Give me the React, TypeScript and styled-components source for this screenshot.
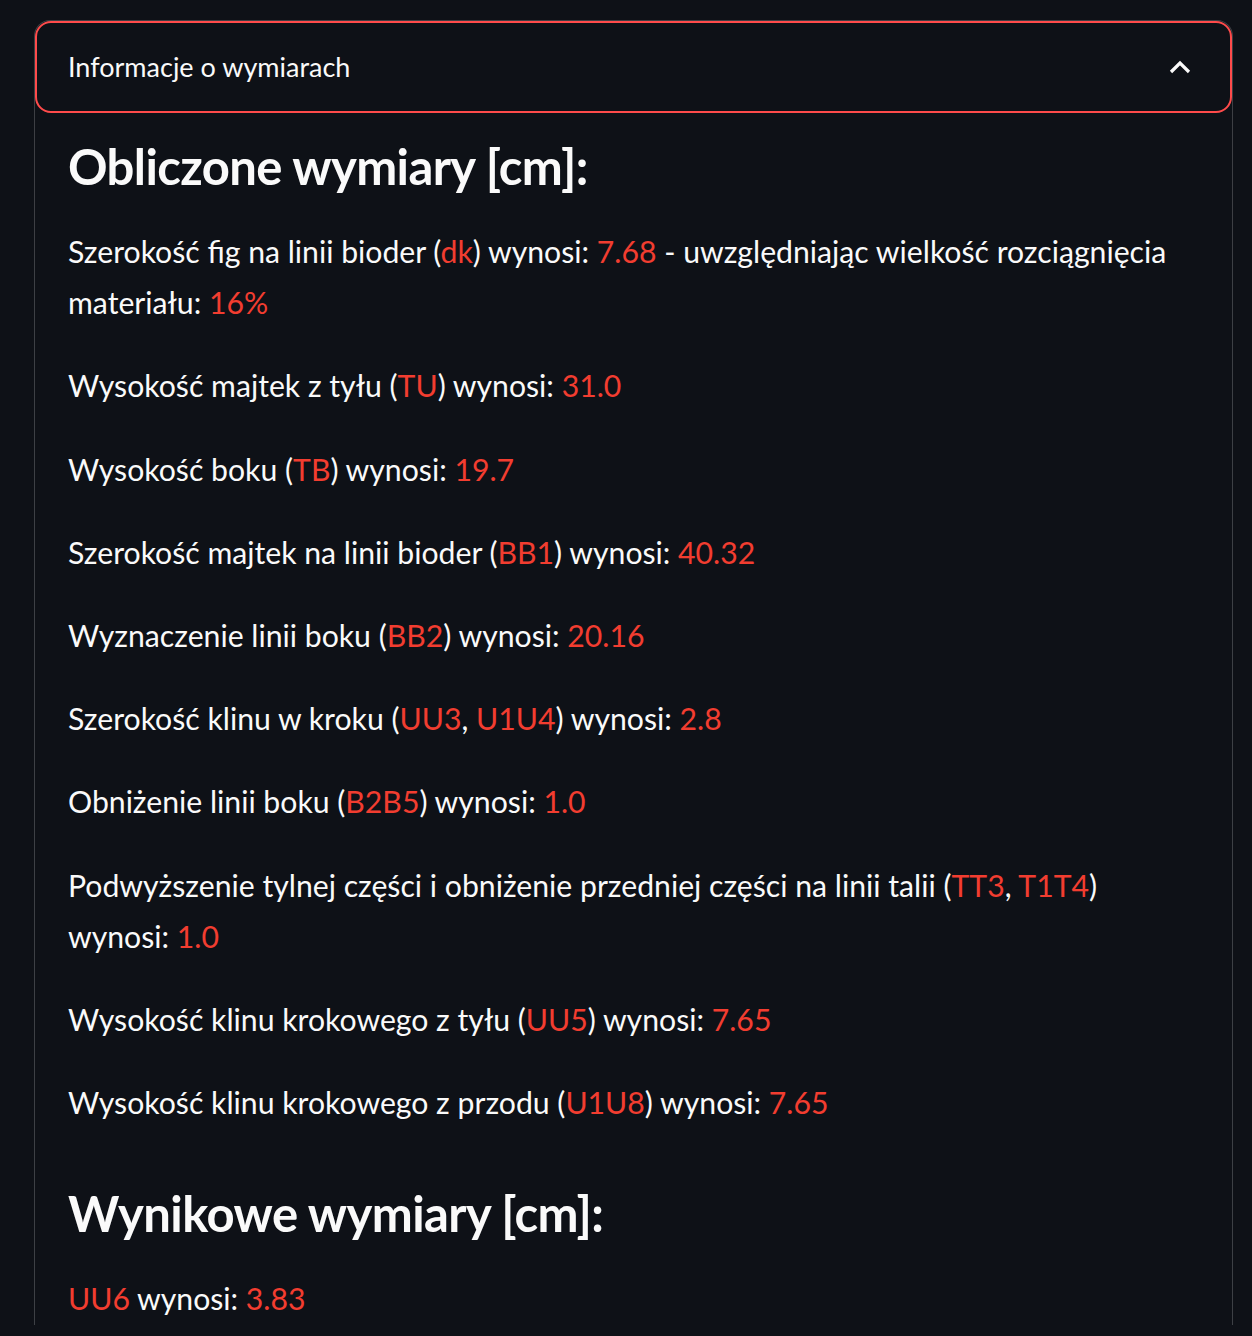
import React, { useState } from 'react';
import styled, { createGlobalStyle } from 'styled-components';

const GlobalStyle = createGlobalStyle`
  html, body {
    margin: 0;
    padding: 0;
    background: #0e1117;
  }
  body {
    font-family: Lato, "Noto Sans", sans-serif;
    color: #fafafa;
  }
`;

const Page = styled.div`
  min-height: 1336px;
  padding: 20px 19px 0 34px;
  box-sizing: border-box;
`;

const Expander = styled.div`
  border: 1px solid rgba(250, 250, 250, 0.2);
  border-bottom: none;
  border-radius: 16px 16px 0 0;
`;

const Summary = styled.button`
  display: flex;
  width: 100%;
  height: 92px;
  box-sizing: border-box;
  align-items: center;
  justify-content: space-between;
  padding: 0 39px 0 31px;
  background: transparent;
  border: 2px solid #ff4b4b;
  border-radius: 16px;
  color: #fafafa;
  font-family: inherit;
  font-size: 27px;
  cursor: pointer;
  margin: 0;

  span {
    position: relative;
    top: -1px;
  }
`;

const Content = styled.div`
  padding: 0 40px 0 33px;
`;

const Heading = styled.h3`
  margin: 0;
  padding: 20px 0 26px;
  font-size: 49px;
  letter-spacing: -0.6px;
  line-height: 67px;
  font-weight: 700;
`;

const Para = styled.p`
  margin: 0 0 32px;
  font-size: 30.2px;
  line-height: 51.2px;
`;

const Red = styled.span`
  color: #f23d30;
`;

const Chevron: React.FC<{ open: boolean }> = ({ open }) => (
  <svg width="22" height="14" viewBox="0 0 22 14" style={{ transform: open ? 'none' : 'rotate(180deg)' }}>
    <path d="M2 12 L11 3 L20 12" fill="none" stroke="#fafafa" strokeWidth="3.2" />
  </svg>
);

type Part = string | { r: string };

const computed: Part[][] = [
  ['Szerokość fig na linii bioder (', { r: 'dk' }, ') wynosi: ', { r: '7.68' }, ' - uwzględniając wielkość rozciągnięcia materiału: ', { r: '16%' }],
  ['Wysokość majtek z tyłu (', { r: 'TU' }, ') wynosi: ', { r: '31.0' }],
  ['Wysokość boku (', { r: 'TB' }, ') wynosi: ', { r: '19.7' }],
  ['Szerokość majtek na linii bioder (', { r: 'BB1' }, ') wynosi: ', { r: '40.32' }],
  ['Wyznaczenie linii boku (', { r: 'BB2' }, ') wynosi: ', { r: '20.16' }],
  ['Szerokość klinu w kroku (', { r: 'UU3' }, ', ', { r: 'U1U4' }, ') wynosi: ', { r: '2.8' }],
  ['Obniżenie linii boku (', { r: 'B2B5' }, ') wynosi: ', { r: '1.0' }],
  ['Podwyższenie tylnej części i obniżenie przedniej części na linii talii (', { r: 'TT3' }, ', ', { r: 'T1T4' }, ') wynosi: ', { r: '1.0' }],
  ['Wysokość klinu krokowego z tyłu (', { r: 'UU5' }, ') wynosi: ', { r: '7.65' }],
  ['Wysokość klinu krokowego z przodu (', { r: 'U1U8' }, ') wynosi: ', { r: '7.65' }],
];

const results: Part[][] = [
  [{ r: 'UU6' }, ' wynosi: ', { r: '3.83' }],
];

const Line: React.FC<{ parts: Part[] }> = ({ parts }) => (
  <Para>
    {parts.map((p, i) => (typeof p === 'string' ? <React.Fragment key={i}>{p}</React.Fragment> : <Red key={i}>{p.r}</Red>))}
  </Para>
);

const App: React.FC = () => {
  const [open, setOpen] = useState(true);
  return (
    <>
      <GlobalStyle />
      <Page>
        <Expander>
          <Summary onClick={() => setOpen(!open)}>
            <span>Informacje o wymiarach</span>
            <Chevron open={open} />
          </Summary>
          {open && (
            <Content>
              <Heading>Obliczone wymiary [cm]:</Heading>
              {computed.map((parts, i) => <Line key={i} parts={parts} />)}
              <Heading>Wynikowe wymiary [cm]:</Heading>
              {results.map((parts, i) => <Line key={i} parts={parts} />)}
            </Content>
          )}
        </Expander>
      </Page>
    </>
  );
};

export default App;
